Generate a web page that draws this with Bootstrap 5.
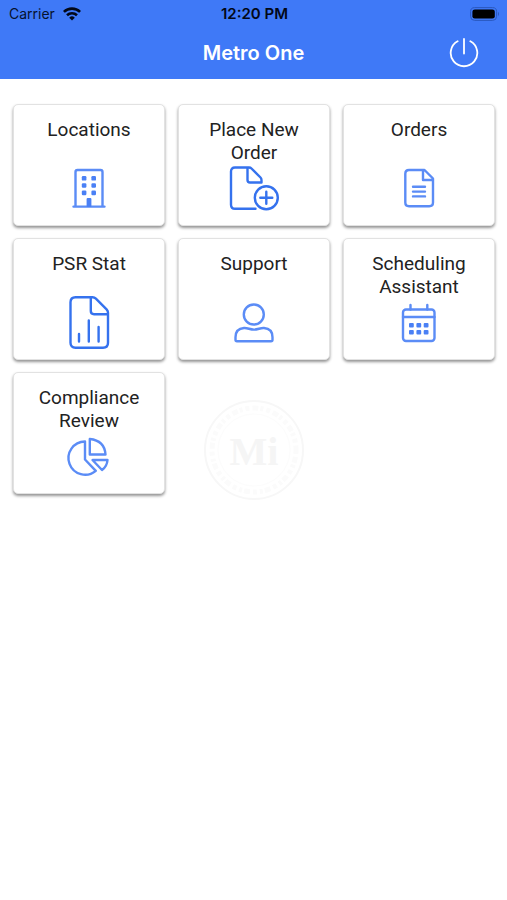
<!DOCTYPE html>
<html lang="en">
<head>
<meta charset="utf-8">
<meta name="viewport" content="width=device-width, initial-scale=1">
<title>Metro One</title>
<link href="https://cdn.jsdelivr.net/npm/bootstrap@5.3.0/dist/css/bootstrap.min.css" rel="stylesheet">
<style>
body{font-family:Roboto,"Liberation Sans",sans-serif;background:#fff;color:#222}
.app-header{background:#3f79f7}
.status-bar{height:27px;padding:0 7px 0 9px;font:14px/27px Inter,sans-serif;color:#06122e}
.status-bar .clock{font-weight:600;font-size:15px;color:#020818}
.title-bar{height:52px;padding:0 28px}
.title-bar h1{font:600 20px/52px Inter,sans-serif}
.side{flex:1 1 0}
.tiles{--bs-gutter-x:13px;--bs-gutter-y:12px}
.tiles-wrap{padding:25px 12px 25px 13px}
.tile{min-height:122px;padding:13px 8px;border:1px solid #e2e2e2;border-radius:5px;box-shadow:0 2px 3px rgba(0,0,0,.42);background:#fff;color:#222}
.tile:hover,.tile:focus-visible{background:#f7f9ff}
.tile-title{font-size:19px;line-height:23px;min-height:46px}
.tile svg{overflow:visible;fill:none;stroke:#5b8cf6;stroke-width:2.4;stroke-linecap:round;stroke-linejoin:round}
.tile svg .solid{fill:#4a80f5;stroke:none}
.tile svg.strong{stroke:#3572ee;stroke-width:2.4}
.watermark{z-index:-1}
</style>
<script src="https://cdn.jsdelivr.net/npm/bootstrap@5.3.0/dist/js/bootstrap.bundle.min.js"></script>
</head>
<body class="position-relative min-vh-100">
<header class="app-header">
  <div class="status-bar d-flex align-items-center">
    <div class="side d-flex align-items-center gap-2">
      <span>Carrier</span>
      <svg width="18" height="14" viewBox="0 0 18 14" fill="none" stroke="#020818" stroke-width="2.6" aria-label="Wi-Fi" role="img">
        <path d="M.9 4.9a11.6 11.6 0 0 1 16.2 0M4 8.3a7.2 7.2 0 0 1 10 0"/>
        <path d="M9 13.6 6.2 10.7a4 4 0 0 1 5.6 0z" fill="#020818" stroke="none"/>
      </svg>
    </div>
    <span class="clock">12:20 PM</span>
    <div class="side d-flex justify-content-end">
      <svg width="30" height="14" viewBox="0 0 30 14" aria-label="Battery" role="img">
        <rect x=".6" y=".6" width="26" height="12.8" rx="4" fill="none" stroke="#2a58bd"/>
        <rect x="2.4" y="2.4" width="22.4" height="9.2" rx="2.4" fill="#000"/>
        <path d="M28 4.8q2 2.2 0 4.4z" fill="#2a58bd"/>
      </svg>
    </div>
  </div>
  <div class="title-bar d-flex align-items-center text-white">
    <div class="side"></div>
    <h1 class="m-0">Metro One</h1>
    <div class="side d-flex justify-content-end">
      <button type="button" class="btn p-0 border-0 d-flex" aria-label="Log out">
        <svg width="30" height="30" viewBox="0 0 30 30" fill="none" stroke="#fff" stroke-width="1.8" stroke-linecap="round"><path d="M15 1v14.500M8.600 3.300a13.300 13.300 0 1 0 12.800 0"/></svg>
      </button>
    </div>
  </div>
</header>
<main class="tiles-wrap">
  <div class="row row-cols-3 tiles mt-0">
    <div class="col mt-0"><button type="button" class="tile w-100 h-100 d-flex flex-column align-items-center">
      <span class="tile-title">Locations</span>
      <svg width="56" height="48" viewBox="0 0 56 48" aria-hidden="true"><path d="M14.5 42V8q0-2 2-2h23q2 0 2 2v34M12.5 42.6h31"/><g class="solid"><rect x="20.8" y="12" width="4.6" height="4.6" rx="1.2"/><rect x="30.4" y="12" width="4.6" height="4.6" rx="1.2"/><rect x="20.8" y="19.2" width="4.6" height="4.6" rx="1.2"/><rect x="30.4" y="19.2" width="4.6" height="4.6" rx="1.2"/><rect x="20.8" y="26.6" width="4.6" height="4.6" rx="1.2"/><rect x="30.4" y="26.6" width="4.6" height="4.6" rx="1.2"/><rect x="25.6" y="34" width="4.8" height="9" rx="1"/></g></svg>
    </button></div>
    <div class="col mt-0"><button type="button" class="tile w-100 h-100 d-flex flex-column align-items-center">
      <span class="tile-title">Place New<br>Order</span>
      <svg class="strong" width="56" height="48" viewBox="0 0 56 48" aria-hidden="true"><path d="M29.5 44.8H9q-4 0-4-4V7.5q0-4 4-4h14q1.5 0 2.5 1l9 9q1 1 1 2.700v2.300H24q-2.500 0-2.500-2.500V4"/><circle cx="40.300" cy="33.700" r="11.500"/><path d="M40.300 27.700v12M34.300 33.700h12"/></svg>
    </button></div>
    <div class="col mt-0"><button type="button" class="tile w-100 h-100 d-flex flex-column align-items-center">
      <span class="tile-title">Orders</span>
      <svg width="56" height="48" viewBox="0 0 56 48" aria-hidden="true"><path d="M18 6h15.500l8.500 8.500v24q0 3.700-3.700 3.700H18q-3.700 0-3.700-3.700V9.700Q14.300 6 18 6zM32 6.500V16h9.500M22 22.800h12M22 27.600h12M22 32.400h12"/></svg>
    </button></div>
    <div class="col"><button type="button" class="tile w-100 h-100 d-flex flex-column align-items-center">
      <span class="tile-title">PSR Stat</span>
      <svg class="strong" width="56" height="48" viewBox="0 0 56 48" aria-hidden="true"><path d="M14.500-.8h17q2 0 3.400 1.400L45.600 11.300Q47 12.700 47 14.700v30q0 5-5 5H14.500q-5 0-5-5V4.200q0-5 5-5zM29.800-.5V13q0 3.200 3.200 3.200h13.500M18 36v7.500M27.800 22.500v21M37.600 29v14.500"/></svg>
    </button></div>
    <div class="col"><button type="button" class="tile w-100 h-100 d-flex flex-column align-items-center">
      <span class="tile-title">Support</span>
      <svg width="56" height="48" viewBox="0 0 56 48" aria-hidden="true"><circle cx="27.800" cy="16.500" r="10"/><path d="M11 43.200q-1.500 0-1.500-1.500v-2.500q0-8.500 8.500-9.200c3.500-.3 6 1.600 10 1.600s6.500-1.900 10-1.600q8.500.7 8.500 9.200v2.500q0 1.500-1.500 1.500z"/></svg>
    </button></div>
    <div class="col"><button type="button" class="tile w-100 h-100 d-flex flex-column align-items-center">
      <span class="tile-title">Scheduling<br>Assistant</span>
      <svg width="56" height="48" viewBox="0 0 56 48" aria-hidden="true"><rect x="12" y="11.500" width="31.500" height="31.500" rx="3"/><path d="M12 19h31.500M19.500 7v4.500M36.300 7v4.500"/><g class="solid"><rect x="18" y="25" width="4.800" height="4.600" rx="1"/><rect x="25.400" y="25" width="4.800" height="4.600" rx="1"/><rect x="32.700" y="25" width="4.800" height="4.600" rx="1"/><rect x="18" y="32" width="4.800" height="4.600" rx="1"/><rect x="25.400" y="32" width="4.800" height="4.600" rx="1"/><rect x="32.700" y="32" width="4.800" height="4.600" rx="1"/></g></svg>
    </button></div>
    <div class="col"><button type="button" class="tile w-100 h-100 d-flex flex-column align-items-center">
      <span class="tile-title">Compliance<br>Review</span>
      <svg width="56" height="48" viewBox="0 0 56 48" aria-hidden="true"><path d="M24 9.500v18L34.800 38.800A16.600 16.600 0 1 1 24 9.500zM28.800 7v15.500h15.700Q43.500 8.500 28.800 7zM31.500 28H46.500q-.5 6.500-5.500 10z"/></svg>
    </button></div>
  </div>
</main>
<svg class="watermark position-absolute top-50 start-50 translate-middle" width="104" height="104" viewBox="0 0 104 104" fill="none" stroke="#f7f7f7" aria-hidden="true">
  <circle cx="52" cy="52" r="49" stroke-width="2"/>
  <circle cx="52" cy="52" r="42" stroke="#fbfbfb" stroke-width="5" stroke-dasharray="4 3 6 2 3 3"/>
  <circle cx="52" cy="52" r="36" stroke="#fcfcfc"/>
  <text x="52" y="67" text-anchor="middle" font-family="Liberation Serif, serif" font-weight="700" font-size="40" fill="#f5f5f5" stroke="none">Mi</text>
</svg>
</body>
</html>
